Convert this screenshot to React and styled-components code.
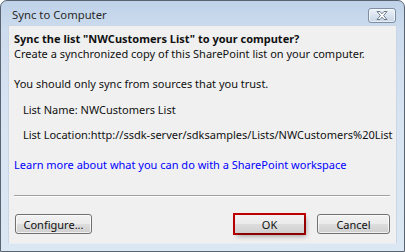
import React from "react";
import styled, { createGlobalStyle } from "styled-components";

const Global = createGlobalStyle`
  html, body { margin: 0; padding: 0; background: #ffffff; }
  body { font-family: "Noto Sans", "Liberation Sans", sans-serif; }
`;

const Window = styled.div`
  box-sizing: border-box;
  width: 405px;
  height: 252px;
  border: 1px solid #5a6470;
  border-radius: 7px 7px 0 0;
  background: linear-gradient(180deg, #bfd2e9 0px, #cddcee 28px, #d8e4f2 120px, #dce7f4 100%);
  display: flex;
  flex-direction: column;
  padding: 0 7px 7px 7px;
  overflow: hidden;
`;

const TitleBar = styled.div`
  height: 27px;
  display: flex;
  align-items: center;
  justify-content: space-between;
  padding-left: 4px;
  padding-right: 1px;
`;

const Title = styled.div`
  font-size: 11.3px;
  color: #2a2a2a;
  padding-top: 3px;
`;

const CloseButton = styled.div`
  box-sizing: border-box;
  width: 28px;
  height: 15px;
  margin-top: 4px;
  border: 1px solid #7d8da2;
  border-radius: 3px;
  background: linear-gradient(180deg, #eef3f9 0%, #d9e3ef 50%, #c9d6e6 100%);
  box-shadow: inset 0 0 0 1px rgba(255, 255, 255, 0.6);
  display: flex;
  align-items: center;
  justify-content: center;
`;

const Content = styled.div`
  flex: 1;
  background: #f0f0f0;
  border: 1px solid #cad6e4;
  border-bottom-color: #e6edf6;
  display: flex;
  flex-direction: column;
  padding: 5px 6px 8px 5px;
  font-size: 11px;
  color: #111;
`;

const Heading = styled.div`
  font-weight: bold;
  line-height: 15px;
`;

const Para = styled.div`
  line-height: 15px;
  margin-top: ${(p) => p.$mt || 0}px;
  padding-left: ${(p) => p.$indent || 0}px;
  white-space: nowrap;
`;

const Link = styled.a`
  display: block;
  margin-top: 15px;
  line-height: 15px;
  color: #0000ff;
  text-decoration: none;
  white-space: nowrap;
`;

const Separator = styled.div`
  margin-top: 23px;
  height: 1px;
  background: #a0a0a0;
  border-bottom: 1px solid #ffffff;
`;

const ButtonRow = styled.div`
  display: flex;
  align-items: center;
  margin-top: 16px;
  padding-left: 1px;
`;

const Spacer = styled.div`
  flex: 1;
`;

const Button = styled.button`
  box-sizing: border-box;
  width: ${(p) => p.$w || 72}px;
  height: 20px;
  border: 1px solid #707070;
  border-radius: 3px;
  background: linear-gradient(180deg, #f2f2f2 0%, #ebebeb 50%, #dddddd 51%, #cfcfcf 100%);
  box-shadow: inset 0 0 0 1px rgba(255, 255, 255, 0.7);
  font-family: inherit;
  font-size: 11px;
  color: #111;
  padding: 0;
  margin: 0;
`;

const FocusBox = styled.div`
  box-sizing: border-box;
  width: 73px;
  height: 22px;
  border: 2px solid #c00000;
  margin-right: 11px;
  display: flex;
`;

const FocusButton = styled(Button)`
  width: 100%;
  height: 100%;
  border: none;
  border-radius: 0;
  box-shadow: 2px 3px 5px rgba(0, 0, 0, 0.35);
`;

function CloseGlyph() {
  return (
    <svg width="14" height="11" viewBox="0 0 14 11">
      <path
        d="M2 1.5 L5 1.5 L7 3.8 L9 1.5 L12 1.5 L8.6 5.5 L12 9.5 L9 9.5 L7 7.2 L5 9.5 L2 9.5 L5.4 5.5 Z"
        fill="#ffffff"
        stroke="#6c7a8c"
        strokeWidth="1"
        strokeLinejoin="round"
      />
    </svg>
  );
}

export default function App() {
  return (
    <>
      <Global />
      <Window>
        <TitleBar>
          <Title>Sync to Computer</Title>
          <CloseButton>
            <CloseGlyph />
          </CloseButton>
        </TitleBar>
        <Content>
          <Heading>Sync the list "NWCustomers List" to your computer?</Heading>
          <Para>Create a synchronized copy of this SharePoint list on your computer.</Para>
          <Para $mt={15}>You should only sync from sources that you trust.</Para>
          <Para $mt={11} $indent={9}>List Name: NWCustomers List</Para>
          <Para $mt={10} $indent={9}>
            List Location:http://ssdk-server/sdksamples/Lists/NWCustomers%20List
          </Para>
          <Link href="#">Learn more about what you can do with a SharePoint workspace</Link>
          <Separator />
          <ButtonRow>
            <Button $w={77}>Configure...</Button>
            <Spacer />
            <FocusBox>
              <FocusButton>OK</FocusButton>
            </FocusBox>
            <Button $w={73}>Cancel</Button>
          </ButtonRow>
        </Content>
      </Window>
    </>
  );
}
